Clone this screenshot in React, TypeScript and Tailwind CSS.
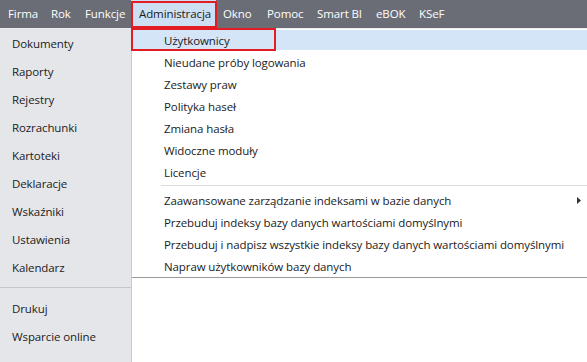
import React from "react";

const menu: [string, string][] = [
  ["Firma", "w-[43px]"],
  ["Rok", "w-[34px]"],
  ["Funkcje", "w-[53px]"],
  ["Administracja", "w-[85px]"],
  ["Okno", "w-[44px]"],
  ["Pomoc", "w-[50px]"],
  ["Smart BI", "w-[59px]"],
  ["eBOK", "w-[43px]"],
  ["KSeF", "w-[50px]"],
];
const side1 = ["Dokumenty", "Raporty", "Rejestry", "Rozrachunki", "Kartoteki", "Deklaracje", "Wskaźniki", "Ustawienia", "Kalendarz"];
const side2 = ["Drukuj", "Wsparcie online"];
const drop1 = ["Nieudane próby logowania", "Zestawy praw", "Polityka haseł", "Zmiana hasła", "Widoczne moduły", "Licencje"];
const drop2 = [
  "Przebuduj indeksy bazy danych wartościami domyślnymi",
  "Przebuduj i nadpisz wszystkie indeksy bazy danych wartościami domyślnymi",
  "Napraw użytkowników bazy danych",
];

export default function App() {
  return (
    <div className="relative w-[587px] h-[362px] overflow-hidden whitespace-nowrap bg-white text-[11.5px] tracking-[-0.1px] text-[#1b1b1b]" style={{ fontFamily: '"Open Sans", "Noto Sans", sans-serif' }}>
      <div className="flex h-[28px] items-stretch bg-[#6a6d75] pl-[1px] text-white">
        {menu.map(([m, w]) => (
          <div key={m} className={`flex shrink-0 items-center pl-[7px] ${w} ${m === "Administracja" ? "bg-[#cde0f3] pl-[8px] text-[#1b1b1b]" : ""}`}>{m}</div>
        ))}
      </div>
      <div className="h-[1px] bg-[#ececec]" />
      <div className="flex h-[333px]">
        <div className="w-[132px] shrink-0 border-r border-[#c9cacd] bg-[#e5e6ea] pt-[1px]">
          {side1.map((s) => (
            <div key={s} className="flex h-[28px] items-center pl-[12px]">{s}</div>
          ))}
          <div className="mt-[5px] h-[1px] bg-[#c5c6ca]" />
          <div className="pt-[7px]">
            {side2.map((s) => (
              <div key={s} className="flex h-[28px] items-center pl-[12px]">{s}</div>
            ))}
          </div>
        </div>
        <div className="flex-1">
          <div className="border-b border-[#9a9a9a]">
            <div className="flex h-[22px] flex-col py-[1px]">
              <div className="flex flex-1 items-center bg-[#d4e5f8] pl-[32px] pt-[1px]">Użytkownicy</div>
            </div>
            {drop1.map((d) => (
              <div key={d} className="flex h-[22px] items-center pl-[32px] pt-[1px]">{d}</div>
            ))}
            <div className="ml-[29px] mt-[2px] mb-[3px] h-[1px] bg-[#dcdcdc]" />
            <div className="relative flex h-[22px] items-center pl-[32px] pt-[1px]">
              Zaawansowane zarządzanie indeksami w bazie danych
              <svg className="absolute right-[6px] top-[8px]" width="4" height="7" viewBox="0 0 4 7"><path d="M0 0 L4 3.5 L0 7 Z" fill="#333" /></svg>
            </div>
            {drop2.map((d) => (
              <div key={d} className="flex h-[22px] items-center pl-[32px] pt-[1px]">{d}</div>
            ))}
          </div>
        </div>
      </div>
      <div className="absolute left-[131px] top-[1px] h-[27px] w-[86px] border-2 border-[#e31b23]" />
      <div className="absolute left-[131px] top-[28px] h-[23px] w-[145px] border-2 border-[#e31b23]" />
    </div>
  );
}
